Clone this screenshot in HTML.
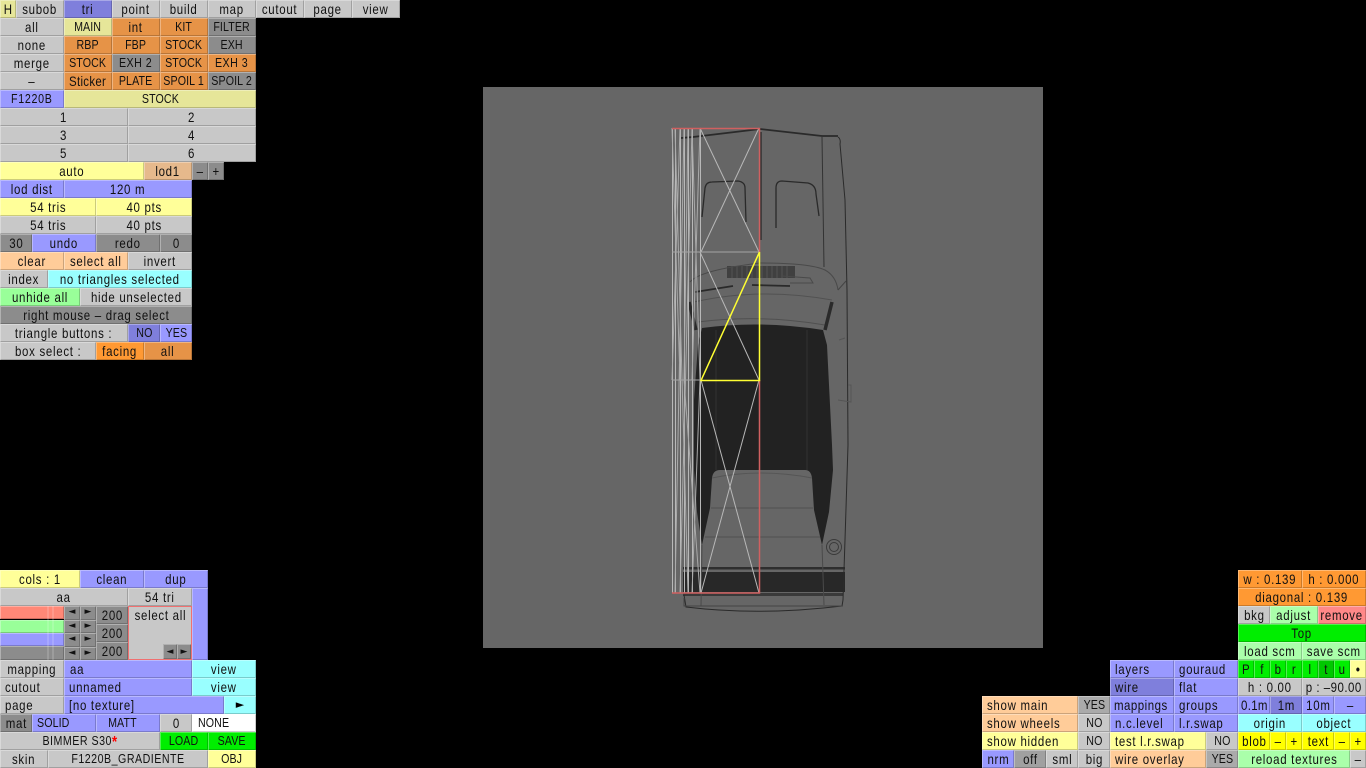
<!DOCTYPE html>
<html><head><meta charset="utf-8"><style>
html,body{margin:0;padding:0;background:#000;width:1366px;height:768px;overflow:hidden}
div.u{position:absolute;height:18px;text-align:center;font:14px/18px "Liberation Sans",sans-serif;letter-spacing:.85px;color:#111;box-sizing:border-box;white-space:nowrap;overflow:hidden;box-shadow:inset 1px 1px 0 rgba(255,255,255,.32),inset -1px -1px 0 rgba(0,0,0,.2)}
div.u i{display:block;font-style:normal;width:140%;margin-left:-20%;transform:scaleX(.82)}
div.l i{margin-left:0;transform-origin:0 50%}
div.k{font-size:13px;letter-spacing:.12px}
.g{background:#c8c8c8}.y{background:#ffff99}.p{background:#e6e699}.o{background:#e69347}.O{background:#ff9933}
.d{background:#8c8c8c}.b{background:#9999ff}.B{background:#7f7fdc}.c{background:#ffcc99}.t{background:#e6b98c}
.n{background:#99ffff}.m{background:#99ff99}.M{background:#aaffaa}.G{background:#00ee00}.Y{background:#ffff00}.r{background:#ff8888}.w{background:#fff}
.l{text-align:left!important;padding-left:5px}
div.a{font-size:9px;letter-spacing:0;line-height:13px;height:13.5px;font-family:"DejaVu Sans",sans-serif}
svg{position:absolute;left:0;top:0}
#all{position:absolute;left:0;top:0;width:1366px;height:768px;filter:blur(.3px)}
</style></head><body><div id="all">
<div class="u p" style="left:0;top:0;width:16px"><i>H</i></div>
<div class="u g" style="left:16px;top:0;width:48px"><i>subob</i></div>
<div class="u B" style="left:64px;top:0;width:48px"><i>tri</i></div>
<div class="u g" style="left:112px;top:0;width:48px"><i>point</i></div>
<div class="u g" style="left:160px;top:0;width:48px"><i>build</i></div>
<div class="u g" style="left:208px;top:0;width:48px"><i>map</i></div>
<div class="u g" style="left:256px;top:0;width:48px"><i>cutout</i></div>
<div class="u g" style="left:304px;top:0;width:48px"><i>page</i></div>
<div class="u g" style="left:352px;top:0;width:48px"><i>view</i></div>

<div class="u g" style="left:0;top:18px;width:64px"><i>all</i></div>
<div class="u p k" style="left:64px;top:18px;width:48px"><i>MAIN</i></div>
<div class="u o" style="left:112px;top:18px;width:48px"><i>int</i></div>
<div class="u o k" style="left:160px;top:18px;width:48px"><i>KIT</i></div>
<div class="u d k" style="left:208px;top:18px;width:48px"><i>FILTER</i></div>

<div class="u g" style="left:0;top:36px;width:64px"><i>none</i></div>
<div class="u o k" style="left:64px;top:36px;width:48px"><i>RBP</i></div>
<div class="u o k" style="left:112px;top:36px;width:48px"><i>FBP</i></div>
<div class="u o k" style="left:160px;top:36px;width:48px"><i>STOCK</i></div>
<div class="u d k" style="left:208px;top:36px;width:48px"><i>EXH</i></div>

<div class="u g" style="left:0;top:54px;width:64px"><i>merge</i></div>
<div class="u o k" style="left:64px;top:54px;width:48px"><i>STOCK</i></div>
<div class="u d k" style="left:112px;top:54px;width:48px;letter-spacing:.6px"><i>EXH 2</i></div>
<div class="u o k" style="left:160px;top:54px;width:48px"><i>STOCK</i></div>
<div class="u o k" style="left:208px;top:54px;width:48px;letter-spacing:.6px"><i>EXH 3</i></div>

<div class="u g" style="left:0;top:72px;width:64px"><i>–</i></div>
<div class="u o" style="left:64px;top:72px;width:48px;letter-spacing:.36px"><i>Sticker</i></div>
<div class="u o k" style="left:112px;top:72px;width:48px"><i>PLATE</i></div>
<div class="u o k" style="left:160px;top:72px;width:48px"><i>SPOIL 1</i></div>
<div class="u d k" style="left:208px;top:72px;width:48px"><i>SPOIL 2</i></div>

<div class="u b k" style="left:0;top:90px;width:64px;letter-spacing:.85px"><i>F1220B</i></div>
<div class="u p k" style="left:64px;top:90px;width:192px"><i>STOCK</i></div>
<div class="u g" style="left:0;top:108px;width:128px"><i>1</i></div>
<div class="u g" style="left:128px;top:108px;width:128px"><i>2</i></div>
<div class="u g" style="left:0;top:126px;width:128px"><i>3</i></div>
<div class="u g" style="left:128px;top:126px;width:128px"><i>4</i></div>
<div class="u g" style="left:0;top:144px;width:128px"><i>5</i></div>
<div class="u g" style="left:128px;top:144px;width:128px"><i>6</i></div>

<div class="u y" style="left:0;top:162px;width:144px"><i>auto</i></div>
<div class="u t" style="left:144px;top:162px;width:48px"><i>lod1</i></div>
<div class="u d" style="left:192px;top:162px;width:16px"><i>–</i></div>
<div class="u d" style="left:208px;top:162px;width:16px"><i>+</i></div>

<div class="u b" style="left:0;top:180px;width:64px"><i>lod dist</i></div>
<div class="u b" style="left:64px;top:180px;width:128px"><i>120 m</i></div>
<div class="u y" style="left:0;top:198px;width:96px"><i>54 tris</i></div>
<div class="u y" style="left:96px;top:198px;width:96px"><i>40 pts</i></div>
<div class="u g" style="left:0;top:216px;width:96px"><i>54 tris</i></div>
<div class="u g" style="left:96px;top:216px;width:96px"><i>40 pts</i></div>
<div class="u d" style="left:0;top:234px;width:32px"><i>30</i></div>
<div class="u b" style="left:32px;top:234px;width:64px"><i>undo</i></div>
<div class="u d" style="left:96px;top:234px;width:64px"><i>redo</i></div>
<div class="u d" style="left:160px;top:234px;width:32px"><i>0</i></div>
<div class="u c" style="left:0;top:252px;width:64px"><i>clear</i></div>
<div class="u c" style="left:64px;top:252px;width:64px"><i>select all</i></div>
<div class="u g" style="left:128px;top:252px;width:64px"><i>invert</i></div>
<div class="u g" style="left:0;top:270px;width:48px"><i>index</i></div>
<div class="u n" style="left:48px;top:270px;width:144px"><i>no triangles selected</i></div>
<div class="u m" style="left:0;top:288px;width:80px"><i>unhide all</i></div>
<div class="u g" style="left:80px;top:288px;width:112px"><i>hide unselected</i></div>
<div class="u d" style="left:0;top:306px;width:192px"><i>right mouse – drag select</i></div>
<div class="u g" style="left:0;top:324px;width:128px"><i>triangle buttons :</i></div>
<div class="u B k" style="left:128px;top:324px;width:32px"><i>NO</i></div>
<div class="u b k" style="left:160px;top:324px;width:32px"><i>YES</i></div>
<div class="u g" style="left:0;top:342px;width:96px"><i>box select :</i></div>
<div class="u O" style="left:96px;top:342px;width:48px"><i>facing</i></div>
<div class="u o" style="left:144px;top:342px;width:48px"><i>all</i></div>

<!-- viewport -->
<div style="position:absolute;left:483px;top:87px;width:560px;height:561px;background:#666"></div>
<svg width="1366" height="768" viewBox="0 0 1366 768" fill="none">
<path d="M702 328Q760 320 823 330L827 345L832 445L833 470L829 512L822 545L814 510L812 478Q811 470 805 470L720 470Q713 470 712 478L710 508L702 545L697 512L694 470L694 400L698 345Z" fill="#222"/>
<path d="M716 330V470M807 330V470" stroke="#333" stroke-width="1"/>
<rect x="683" y="572" width="162" height="20" fill="#282828"/>
<rect x="683" y="567" width="162" height="2.5" fill="#2e2e2e"/>
<rect x="683" y="593" width="160" height="3" fill="#3a3a3a"/>
<rect x="727" y="266" width="68" height="12" fill="#404040"/>
<path d="M732 266v12M737 266v12M742 266v12M747 266v12M752 266v12M757 266v12M762 266v12M767 266v12M772 266v12M777 266v12M782 266v12M787 266v12" stroke="#555"/>
<g stroke="#2a2a2a" stroke-width="1">
<path d="M838 137Q841 139 840 144L845 200L847 290L848 445L845 540L843 600L842 606Q760 616 686 607L684 595"/>
<path d="M681 138L693 137L760 129L822 136L838 136" stroke-width="1.700"/>
<path d="M702 217L705 188Q706 182 712 182L738 181Q745 182 745 188L746 222" stroke-width="1.300"/>
<path d="M776 228L776 188Q776 181 782 181L808 183Q816 185 816 194L819 216" stroke-width="1.300"/>
<path d="M761 132L761 240" stroke-width="1.300"/>
<path d="M822 137L824 267" stroke="#333"/>
<path d="M690 282Q700 270 760 263Q810 263 825 270Q836 276 838 290" stroke="#4a4a4a"/>
<path d="M694 302Q760 287 832 300" stroke="#525252"/>
<path d="M698 322Q760 314 825 325" stroke="#505050"/>
<path d="M782 276L810 278L813 283L790 283" stroke="#4a4a4a"/>
<path d="M695 292L733 286" stroke-width="1.800"/>
<path d="M752 285L790 286" stroke-width="1.800"/>
<path d="M825 330L832 302" stroke-width="3.500"/>
<path d="M696 330L689 302" stroke-width="3.500"/>
<path d="M838 290L846 281" stroke="#444"/>
<path d="M839 340L845 338M838 400L851 402L851 385L848 385" stroke="#555"/>
<path d="M711 508L813 508M705 537L820 537" stroke="#505050"/>
<path d="M712 478Q760 468 812 478" stroke="#555"/>
<path d="M822 545L824 605M702 545L701 606" stroke="#4a4a4a"/>
<circle cx="834" cy="547" r="7.500" stroke="#3a3a3a"/>
<circle cx="834" cy="547" r="4.500" stroke="#3a3a3a"/>
<path d="M684 598L684 606Q760 606 843 606" stroke="#444"/>
</g>
<g stroke="#b8b8b8" stroke-width="1">
<path d="M672.500 128V593M675.500 128V593M680.500 128V593M684.500 128V593M688.500 128V593M692.500 128V593M700.500 128V593" />
<path d="M672 128L680 380M675 128L688 593M680 128L672 380M684 128L675 593M688 128L684 380M692 128L680 593M700 128L692 380M692 128L700 380M700 380L692 593M684 380L700 593" stroke="#aaa"/>
<path d="M700 128L759 252M759 128L701 252M700 252L759 380"/>
<path d="M701 380L759 593M759 380L701 593"/>
<path d="M672 252H759M672 380H701" stroke="#a4a4a4"/>
</g>
<g stroke="#d06060">
<path d="M672 128.500H759.500V252" stroke-width="1.500"/>
<path d="M759.500 380V593H672" stroke-width="1.500"/>
</g>
<path d="M759.500 252L701 380.500H759.500Z" stroke="#ffff33" stroke-width="1.500"/>
</svg>

<!-- bottom left -->
<div class="u y" style="left:0;top:570px;width:80px"><i>cols : 1</i></div>
<div class="u b" style="left:80px;top:570px;width:64px"><i>clean</i></div>
<div class="u b" style="left:144px;top:570px;width:64px"><i>dup</i></div>
<div class="u g" style="left:0;top:588px;width:128px"><i>aa</i></div>
<div class="u g" style="left:128px;top:588px;width:64px"><i>54 tri</i></div>
<div class="u b" style="left:192px;top:588px;width:16px;height:72px"></div>

<div class="u" style="left:0;top:606px;width:64px;height:13px;background:#ff8877"></div>
<div class="u" style="left:0;top:620px;width:64px;height:13px;background:#99ff99"></div>
<div class="u" style="left:0;top:633px;width:64px;height:13px;background:#9999ff"></div>
<div class="u" style="left:0;top:646px;width:64px;height:14px;background:#8c8c8c"></div>
<svg width="64" height="54" style="left:0;top:606px"><path d="M48 0V54M53 0V54" stroke="#fff" stroke-opacity=".3"/></svg>

<div class="u d a" style="left:64px;top:606px;width:16px">◄</div>
<div class="u d a" style="left:80px;top:606px;width:16px">►</div>
<div class="u d a" style="left:64px;top:619.500px;width:16px">◄</div>
<div class="u d a" style="left:80px;top:619.500px;width:16px">►</div>
<div class="u d a" style="left:64px;top:633px;width:16px">◄</div>
<div class="u d a" style="left:80px;top:633px;width:16px">►</div>
<div class="u d a" style="left:64px;top:646.500px;width:16px">◄</div>
<div class="u d a" style="left:80px;top:646.500px;width:16px">►</div>
<div class="u d" style="left:96px;top:606px;width:32px"><i>200</i></div>
<div class="u d" style="left:96px;top:624px;width:32px"><i>200</i></div>
<div class="u d" style="left:96px;top:642px;width:32px"><i>200</i></div>
<div class="u g" style="left:128px;top:606px;width:64px;height:54px;box-shadow:none;border:1.500px solid #f07070;line-height:16px"><i>select all</i></div>
<div class="u d a" style="left:163px;top:644px;width:14px;height:15px;line-height:16px">◄</div>
<div class="u d a" style="left:177px;top:644px;width:14px;height:15px;line-height:16px">►</div>

<div class="u g" style="left:0;top:660px;width:64px"><i>mapping</i></div>
<div class="u b l" style="left:64px;top:660px;width:128px;padding-left:6px"><i>aa</i></div>
<div class="u n" style="left:192px;top:660px;width:64px"><i>view</i></div>
<div class="u g l" style="left:0;top:678px;width:64px"><i>cutout</i></div>
<div class="u b l" style="left:64px;top:678px;width:128px"><i>unnamed</i></div>
<div class="u n" style="left:192px;top:678px;width:64px"><i>view</i></div>
<div class="u g l" style="left:0;top:696px;width:64px"><i>page</i></div>
<div class="u b l" style="left:64px;top:696px;width:160px"><i>[no texture]</i></div>
<div class="u n a" style="left:224px;top:696px;width:32px;height:18px;font-size:11px;line-height:18px;color:#000">►</div>
<div class="u d" style="left:0;top:714px;width:32px"><i>mat</i></div>
<div class="u b k l" style="left:32px;top:714px;width:64px"><i>SOLID</i></div>
<div class="u b k" style="left:96px;top:714px;width:64px;padding-right:12px"><i>MATT</i></div>
<div class="u g" style="left:160px;top:714px;width:32px"><i>0</i></div>
<div class="u w k l" style="left:192px;top:714px;width:64px;padding-left:6px"><i>NONE</i></div>
<div class="u g k" style="left:0;top:732px;width:160px;letter-spacing:.6px"><i>BIMMER S30<span style="color:#f00;font-size:16px;font-weight:bold;vertical-align:-2px;line-height:10px">*</span></i></div>
<div class="u G k" style="left:160px;top:732px;width:48px"><i>LOAD</i></div>
<div class="u G k" style="left:208px;top:732px;width:48px"><i>SAVE</i></div>
<div class="u g" style="left:0;top:750px;width:48px"><i>skin</i></div>
<div class="u g k" style="left:48px;top:750px;width:160px;letter-spacing:.6px"><i>F1220B_GRADIENTE</i></div>
<div class="u y k" style="left:208px;top:750px;width:48px"><i>OBJ</i></div>

<!-- bottom right -->
<div class="u O" style="left:1238px;top:570px;width:64px"><i>w : 0.139</i></div>
<div class="u O" style="left:1302px;top:570px;width:64px"><i>h : 0.000</i></div>
<div class="u O" style="left:1238px;top:588px;width:128px"><i>diagonal : 0.139</i></div>
<div class="u g" style="left:1238px;top:606px;width:32px"><i>bkg</i></div>
<div class="u M" style="left:1270px;top:606px;width:48px"><i>adjust</i></div>
<div class="u r" style="left:1318px;top:606px;width:48px"><i>remove</i></div>
<div class="u G" style="left:1238px;top:624px;width:128px"><i>Top</i></div>
<div class="u M" style="left:1238px;top:642px;width:64px"><i>load scm</i></div>
<div class="u M" style="left:1302px;top:642px;width:64px"><i>save scm</i></div>
<div class="u G" style="left:1238px;top:660px;width:16px"><i>P</i></div>
<div class="u G" style="left:1254px;top:660px;width:16px"><i>f</i></div>
<div class="u G" style="left:1270px;top:660px;width:16px"><i>b</i></div>
<div class="u G" style="left:1286px;top:660px;width:16px"><i>r</i></div>
<div class="u G" style="left:1302px;top:660px;width:16px"><i>l</i></div>
<div class="u" style="left:1318px;top:660px;width:16px;background:#00c800"><i>t</i></div>
<div class="u G" style="left:1334px;top:660px;width:16px"><i>u</i></div>
<div class="u y" style="left:1350px;top:660px;width:16px;font-weight:bold"><i>•</i></div>
<div class="u g" style="left:1238px;top:678px;width:64px"><i>h : 0.00</i></div>
<div class="u g" style="left:1302px;top:678px;width:64px;letter-spacing:.6px"><i>p : –90.00</i></div>
<div class="u b" style="left:1238px;top:696px;width:32px;letter-spacing:.36px"><i>0.1m</i></div>
<div class="u B" style="left:1270px;top:696px;width:32px"><i>1m</i></div>
<div class="u b" style="left:1302px;top:696px;width:32px"><i>10m</i></div>
<div class="u b" style="left:1334px;top:696px;width:32px"><i>–</i></div>
<div class="u n" style="left:1238px;top:714px;width:64px"><i>origin</i></div>
<div class="u n" style="left:1302px;top:714px;width:64px"><i>object</i></div>
<div class="u Y" style="left:1238px;top:732px;width:32px"><i>blob</i></div>
<div class="u Y" style="left:1270px;top:732px;width:16px"><i>–</i></div>
<div class="u Y" style="left:1286px;top:732px;width:16px"><i>+</i></div>
<div class="u Y" style="left:1302px;top:732px;width:32px"><i>text</i></div>
<div class="u Y" style="left:1334px;top:732px;width:16px"><i>–</i></div>
<div class="u Y" style="left:1350px;top:732px;width:16px"><i>+</i></div>
<div class="u M" style="left:1238px;top:750px;width:112px"><i>reload textures</i></div>
<div class="u g" style="left:1350px;top:750px;width:16px"><i>–</i></div>

<div class="u b l" style="left:1110px;top:660px;width:64px"><i>layers</i></div>
<div class="u b l" style="left:1174px;top:660px;width:64px"><i>gouraud</i></div>
<div class="u B l" style="left:1110px;top:678px;width:64px"><i>wire</i></div>
<div class="u b l" style="left:1174px;top:678px;width:64px"><i>flat</i></div>
<div class="u b l" style="left:1110px;top:696px;width:64px;padding-left:4px;letter-spacing:.6px"><i>mappings</i></div>
<div class="u b l" style="left:1174px;top:696px;width:64px"><i>groups</i></div>
<div class="u b l" style="left:1110px;top:714px;width:64px"><i>n.c.level</i></div>
<div class="u b l" style="left:1174px;top:714px;width:64px"><i>l.r.swap</i></div>
<div class="u y l" style="left:1110px;top:732px;width:96px"><i>test l.r.swap</i></div>
<div class="u g k" style="left:1206px;top:732px;width:32px"><i>NO</i></div>
<div class="u c l" style="left:1110px;top:750px;width:96px"><i>wire overlay</i></div>
<div class="u g k" style="left:1206px;top:750px;width:32px;background:#aaa"><i>YES</i></div>

<div class="u c l" style="left:982px;top:696px;width:96px"><i>show main</i></div>
<div class="u g k" style="left:1078px;top:696px;width:32px;background:#aaa"><i>YES</i></div>
<div class="u c l" style="left:982px;top:714px;width:96px"><i>show wheels</i></div>
<div class="u g k" style="left:1078px;top:714px;width:32px"><i>NO</i></div>
<div class="u y l" style="left:982px;top:732px;width:96px"><i>show hidden</i></div>
<div class="u g k" style="left:1078px;top:732px;width:32px"><i>NO</i></div>
<div class="u b" style="left:982px;top:750px;width:32px"><i>nrm</i></div>
<div class="u" style="left:1014px;top:750px;width:32px;background:#a0a0a0"><i>off</i></div>
<div class="u g" style="left:1046px;top:750px;width:32px"><i>sml</i></div>
<div class="u g" style="left:1078px;top:750px;width:32px"><i>big</i></div>
</div></body></html>
